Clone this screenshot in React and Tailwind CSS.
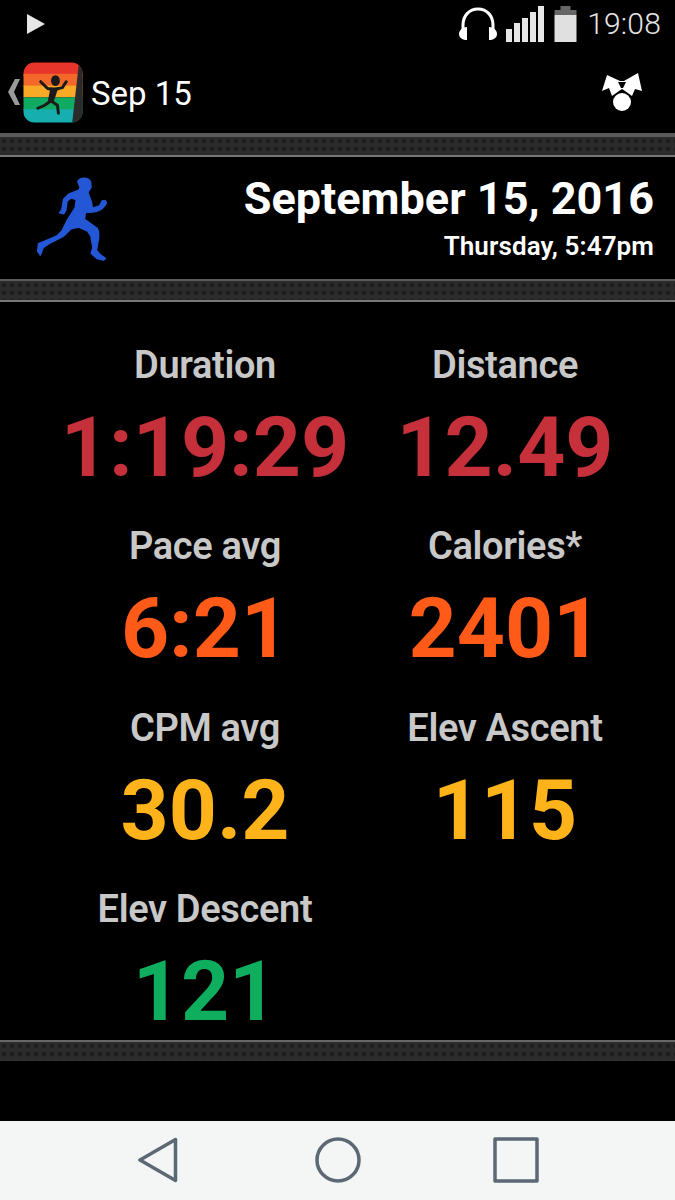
function Divider({ top = "h-[4px] bg-[#5a5a5a]", bottom = "h-[2px] bg-[#777]", mid = "h-[18px]" }) {
  return (
    <div className="flex flex-col">
      <div className={top} />
      <div className={`${mid} bg-[#2a2a2a] bg-[radial-gradient(circle,#1e1e1e_1.5px,#2c2c2c_3px)] bg-[length:8px_8px]`} />
      <div className={bottom} />
    </div>
  );
}

function Stat({ label, value, color }) {
  return (
    <div className="flex flex-col items-center">
      <div className="text-[38px] leading-[40px] font-semibold text-[#c8c8c8] tracking-[-0.35px]">{label}</div>
      <div className={`text-[84px] font-bold leading-[96px] mt-[15px] ${color}`}>{value}</div>
    </div>
  );
}

function AppIcon() {
  return (
    <svg width="60" height="61" viewBox="0 0 61 62">
      <defs>
        <clipPath id="ic"><rect x="0.5" y="0.5" width="60" height="61" rx="11" /></clipPath>
      </defs>
      <g clipPath="url(#ic)">
        <rect width="62" height="14" fill="#e8352b" />
        <rect y="12" width="62" height="13" fill="#f4672a" />
        <rect y="24" width="62" height="12" fill="#f8a925" />
        <rect y="36" width="62" height="13" fill="#10ab62" />
        <rect y="48" width="62" height="14" fill="#16aeae" />
        <path d="M57 0H62V62H50Z" fill="#2b2b2b" />
      </g>
      <ellipse cx="33" cy="19" rx="4.5" ry="5.5" fill="#1a1a1a" />
      <path d="M18 20L25 27L31 28L28 40L22 44L15 47M32 28L40 26L44 20M29 40L35 44L36 52" fill="none" stroke="#1a1a1a" strokeWidth="3" strokeLinecap="round" strokeLinejoin="round" />
      <path d="M28 26H36L31 41H25Z" fill="#1a1a1a" />
    </svg>
  );
}

function Runner() {
  return (
    <svg width="70" height="84" viewBox="110 78 210 252" fill="#2457d6" stroke="#2457d6" strokeWidth="5" strokeLinejoin="round">
      <path d="M233 92C238 80 262 78 270 92L272 108L266 118L262 125L272 150L276 172L298 165L306 150C314 146 320 152 316 160L306 172C295 180 275 185 255 183L252 205L262 212L290 232C296 240 296 260 292 275L288 298L300 312L315 322L310 327L290 322L273 307L278 290L272 255L262 240L235 228L212 233L190 255L150 275L128 290L120 312L112 300L115 278L135 270L170 255L185 240L200 210L225 170L228 145L212 140L200 150L196 178L190 188L178 185L185 176L190 145L205 130L235 118L240 110Z" />
    </svg>
  );
}

export default function App() {
  return (
    <div className="w-[675px] h-[1200px] bg-black flex flex-col font-['Roboto',sans-serif] overflow-hidden">
      {/* status bar */}
      <div className="h-[48px] flex items-center justify-between pl-[27px] pr-[14px]">
        <svg width="18" height="20" viewBox="0 0 18 20"><path d="M0 0L18 10L0 20Z" fill="#e6e6e6" /></svg>
        <div className="flex items-center">
          <svg width="40" height="36" viewBox="0 0 40 36" className="mr-[8px]" fill="none">
            <path d="M5 28V19C5 10 11 3 20 3C29 3 35 10 35 19V28" stroke="#fff" strokeWidth="3" />
            <path d="M9 21V34C5 34 1 32 1 28C1 24 5 21 9 21Z" fill="#fff" />
            <path d="M31 21V34C35 34 39 32 39 28C39 24 35 21 31 21Z" fill="#fff" />
          </svg>
          <svg width="38" height="36" viewBox="0 0 38 36" className="mr-[10px]" fill="#e6e6e6">
            <rect x="0" y="23" width="6" height="13" />
            <rect x="8" y="17" width="6" height="19" />
            <rect x="16" y="12" width="6" height="24" />
            <rect x="24" y="6" width="6" height="30" />
            <rect x="32" y="0" width="6" height="36" />
          </svg>
          <svg width="23" height="36" viewBox="0 0 22 36" className="mr-[10px]">
            <rect x="6" y="0" width="10" height="4" fill="#666" />
            <rect x="0" y="4" width="22" height="5" fill="#666" />
            <rect x="0" y="9" width="22" height="27" fill="#e0e0e0" />
          </svg>
          <div className="text-[30px] leading-[36px] font-light text-[#e6e6e6] tracking-[0.2px]">19:08</div>
        </div>
      </div>

      {/* action bar */}
      <div className="h-[85px] flex items-center justify-between pt-[3px] pl-[8px] pr-[33px]">
        <div className="flex items-center">
          <svg width="12" height="26" viewBox="0 0 12 26"><path d="M12 0H7L0 13L7 26H12L6 13Z" fill="#999" /></svg>
          <div className="ml-[3px]"><AppIcon /></div>
          <div className="text-[33px] leading-[40px] text-white ml-[8px] mt-[4px]">Sep 15</div>
        </div>
        <svg width="40" height="38" viewBox="0 0 40 38" fill="#fff">
          <path d="M0 18L5 2L18 8H22L36 0L40 18L33 16L30 23L23 18L20 16L17 18L10 23L7 15Z" />
          <path d="M16 9H24L21 15H19Z" fill="#000" />
          <circle cx="20" cy="29" r="9" />
        </svg>
      </div>

      <Divider />

      {/* title */}
      <div className="h-[122px] flex items-start justify-between pl-[37px] pr-[21px]">
        <div className="pt-[20px]"><Runner /></div>
        <div className="flex flex-col items-end pt-[19px]">
          <div className="text-[45px] leading-[46px] font-bold text-white">September 15, 2016</div>
          <div className="text-[26px] leading-[30px] font-semibold text-white mt-[9px] tracking-[0.1px]">Thursday, 5:47pm</div>
        </div>
      </div>

      <Divider top="h-[2px] bg-[#5a5a5a]" bottom="h-[2px] bg-[#777]" mid="h-[19px]" />

      {/* stats */}
      <div className="h-[738px] pl-[55px] pr-[20px] pt-[43px] grid grid-cols-[300px_300px] auto-rows-[181.4px] content-start">
        <Stat label="Duration" value="1:19:29" color="text-[#c5303b]" />
        <Stat label="Distance" value="12.49" color="text-[#c5303b]" />
        <Stat label="Pace avg" value="6:21" color="text-[#ff5a17]" />
        <Stat label="Calories*" value="2401" color="text-[#ff5a17]" />
        <Stat label="CPM avg" value="30.2" color="text-[#ffb31a]" />
        <Stat label="Elev Ascent" value="115" color="text-[#ffb31a]" />
        <Stat label="Elev Descent" value="121" color="text-[#0fae5f]" />
      </div>

      <Divider top="h-[2px] bg-[#666]" bottom="h-[1px] bg-[#333]" mid="h-[18px]" />

      <div className="h-[60px]" />

      {/* nav bar */}
      <div className="h-[79px] bg-[#f4f5f5] flex items-center justify-center pb-[2px] pl-[2px]">
        <svg width="40" height="46" viewBox="0 0 40 46" fill="none" className="mr-[137px]">
          <path d="M37.5 2.5V43.5L2 23Z" stroke="#5c6873" strokeWidth="3.5" strokeLinejoin="round" />
        </svg>
        <svg width="46" height="46" viewBox="0 0 46 46" fill="none" className="mr-[132px]">
          <circle cx="23" cy="23" r="21" stroke="#5c6873" strokeWidth="3.5" />
        </svg>
        <svg width="46" height="46" viewBox="0 0 46 46" fill="none">
          <rect x="2" y="2" width="42" height="42" stroke="#5c6873" strokeWidth="3.5" strokeLinejoin="round" />
        </svg>
      </div>
    </div>
  );
}
